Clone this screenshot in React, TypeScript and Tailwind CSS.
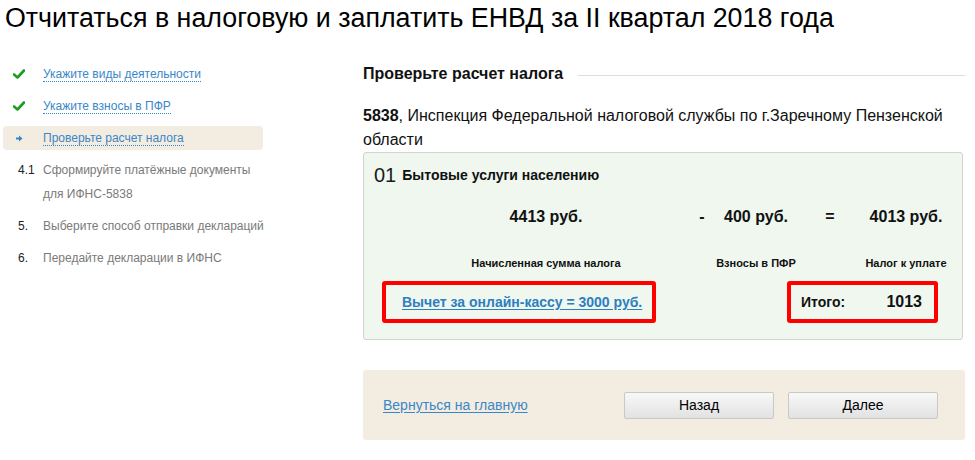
import React from 'react';

const Check = () => (
  <svg width="12" height="10" viewBox="0 0 12 10" className="ml-[-5px]">
    <path d="M1 5.5 L4.5 8.5 L11 1.5" fill="none" stroke="#1f9a25" strokeWidth="2.6" strokeLinecap="round" strokeLinejoin="round" />
  </svg>
);

const Arrow = () => (
  <svg width="7" height="7" viewBox="0 0 7 7" className="ml-[-2px]">
    <path d="M0 2.5 H3 V0.5 L6.5 3.5 L3 6.5 V4.5 H0 Z" fill="#2f86d0" />
  </svg>
);

const steps = [
  { mark: 'check', text: 'Укажите виды деятельности', link: true },
  { mark: 'check', text: 'Укажите взносы в ПФР', link: true },
  { mark: 'arrow', text: 'Проверьте расчет налога', link: true, active: true },
  { mark: '4.1', text: 'Сформируйте платёжные документы для ИФНС-5838' },
  { mark: '5.', text: 'Выберите способ отправки деклараций' },
  { mark: '6.', text: 'Передайте декларации в ИФНС' },
];

export default function App() {
  return (
    <div className="w-[975px] h-[460px] bg-white overflow-hidden text-[#111] font-['Liberation_Sans',Arial,sans-serif]">
      <h1 className="pt-[3px] pl-[5px] text-[26.8px] leading-[30px] font-normal text-black whitespace-nowrap">
        Отчитаться в налоговую и заплатить ЕНВД за II квартал 2018 года
      </h1>

      <div className="flex mt-[29px]">
        {/* steps */}
        <div className="ml-[3px] w-[260px] flex flex-col gap-[8px]">
          {steps.map((s) => (
            <div
              key={s.text}
              className={`flex pl-[15px] text-[12px] leading-[24px] rounded-[4px] ${s.active ? 'bg-[#f3ece1]' : ''}`}
            >
              <div className="w-[25px] shrink-0 flex items-start">
                {s.mark === 'check' ? (
                  <span className="h-[24px] flex items-center"><Check /></span>
                ) : s.mark === 'arrow' ? (
                  <span className="h-[24px] flex items-center"><Arrow /></span>
                ) : (
                  <span className="text-[#222]">{s.mark}</span>
                )}
              </div>
              <div className="w-[225px] shrink-0">
                {s.link ? (
                  <span className="text-[#3a87c8] border-b border-dotted border-[#3a87c8]">{s.text}</span>
                ) : (
                  <span className="text-[#7a7a7a]">{s.text}</span>
                )}
              </div>
            </div>
          ))}
        </div>

        {/* main */}
        <div className="ml-[100px] w-[602px]">
          <div className="h-[24px] flex items-center gap-[15px]">
            <span className="text-[16px] font-bold">Проверьте расчет налога</span>
            <div className="flex-1 h-px bg-[#dddddd] mt-[3px]" />
          </div>

          <p className="mt-[18px] text-[16px] leading-[24px] text-[#111]">
            <span className="font-bold">5838</span>, Инспекция Федеральной налоговой службы по г.Заречному Пензенской области
          </p>

          <div className="w-[600px] border border-[#d2d2d2] rounded-[3px] bg-[#eff7ef] pt-[10px] pb-[16px]">
            <div className="pl-[10px] h-[24px] flex items-center gap-[6px]">
              <span className="text-[20px] text-[#1a1a1a]">01</span>
              <span className="text-[14px] font-bold">Бытовые услуги населению</span>
            </div>

            <div className="mt-[18px] h-[24px] grid grid-cols-[40px_284px_28px_80px_68px_84px] items-center text-[16px] font-bold">
              <div />
              <div className="flex justify-center whitespace-nowrap">4413 руб.</div>
              <div className="flex justify-center">-</div>
              <div className="flex justify-center whitespace-nowrap">400 руб.</div>
              <div className="flex justify-center">=</div>
              <div className="flex justify-center whitespace-nowrap">4013 руб.</div>
            </div>

            <div className="mt-[26px] h-[16px] grid grid-cols-[40px_284px_28px_80px_68px_84px] items-center text-[11px] font-bold">
              <div />
              <div className="flex justify-center whitespace-nowrap">Начисленная сумма налога</div>
              <div />
              <div className="flex justify-center whitespace-nowrap">Взносы в ПФР</div>
              <div />
              <div className="flex justify-center whitespace-nowrap">Налог к уплате</div>
            </div>

            <div className="mt-[10px] flex">
              <div className="ml-[18px] w-[274px] h-[42px] border-[4px] border-[#ff0000] rounded-[3px] flex items-center pl-[16px]">
                <a href="#" className="text-[14px] font-bold text-[#2d7fc0] underline underline-offset-2 whitespace-nowrap">
                  Вычет за онлайн-кассу = 3000 руб.
                </a>
              </div>
              <div className="ml-auto mr-[24px] w-[151px] h-[42px] border-[4px] border-[#ff0000] rounded-[3px] flex items-center pl-[10px] pr-[12px]">
                <span className="text-[14px] font-bold">Итого:</span>
                <span className="ml-auto text-[16px] font-bold">1013</span>
              </div>
            </div>
          </div>

          <div className="mt-[30px] h-[70px] rounded-[3px] bg-[#f3ece1] flex items-center pl-[20px] pr-[27px]">
            <a href="#" className="text-[14px] text-[#3a87c8] underline underline-offset-2">Вернуться на главную</a>
            <button className="ml-auto w-[150px] h-[27px] rounded-[2px] border border-[#c8c8c8] bg-gradient-to-b from-[#f8f8f8] to-[#e2e2e2] text-[14px] text-black">
              Назад
            </button>
            <button className="ml-[14px] w-[150px] h-[27px] rounded-[2px] border border-[#c8c8c8] bg-gradient-to-b from-[#f8f8f8] to-[#e2e2e2] text-[14px] text-black">
              Далее
            </button>
          </div>
        </div>
      </div>
    </div>
  );
}
